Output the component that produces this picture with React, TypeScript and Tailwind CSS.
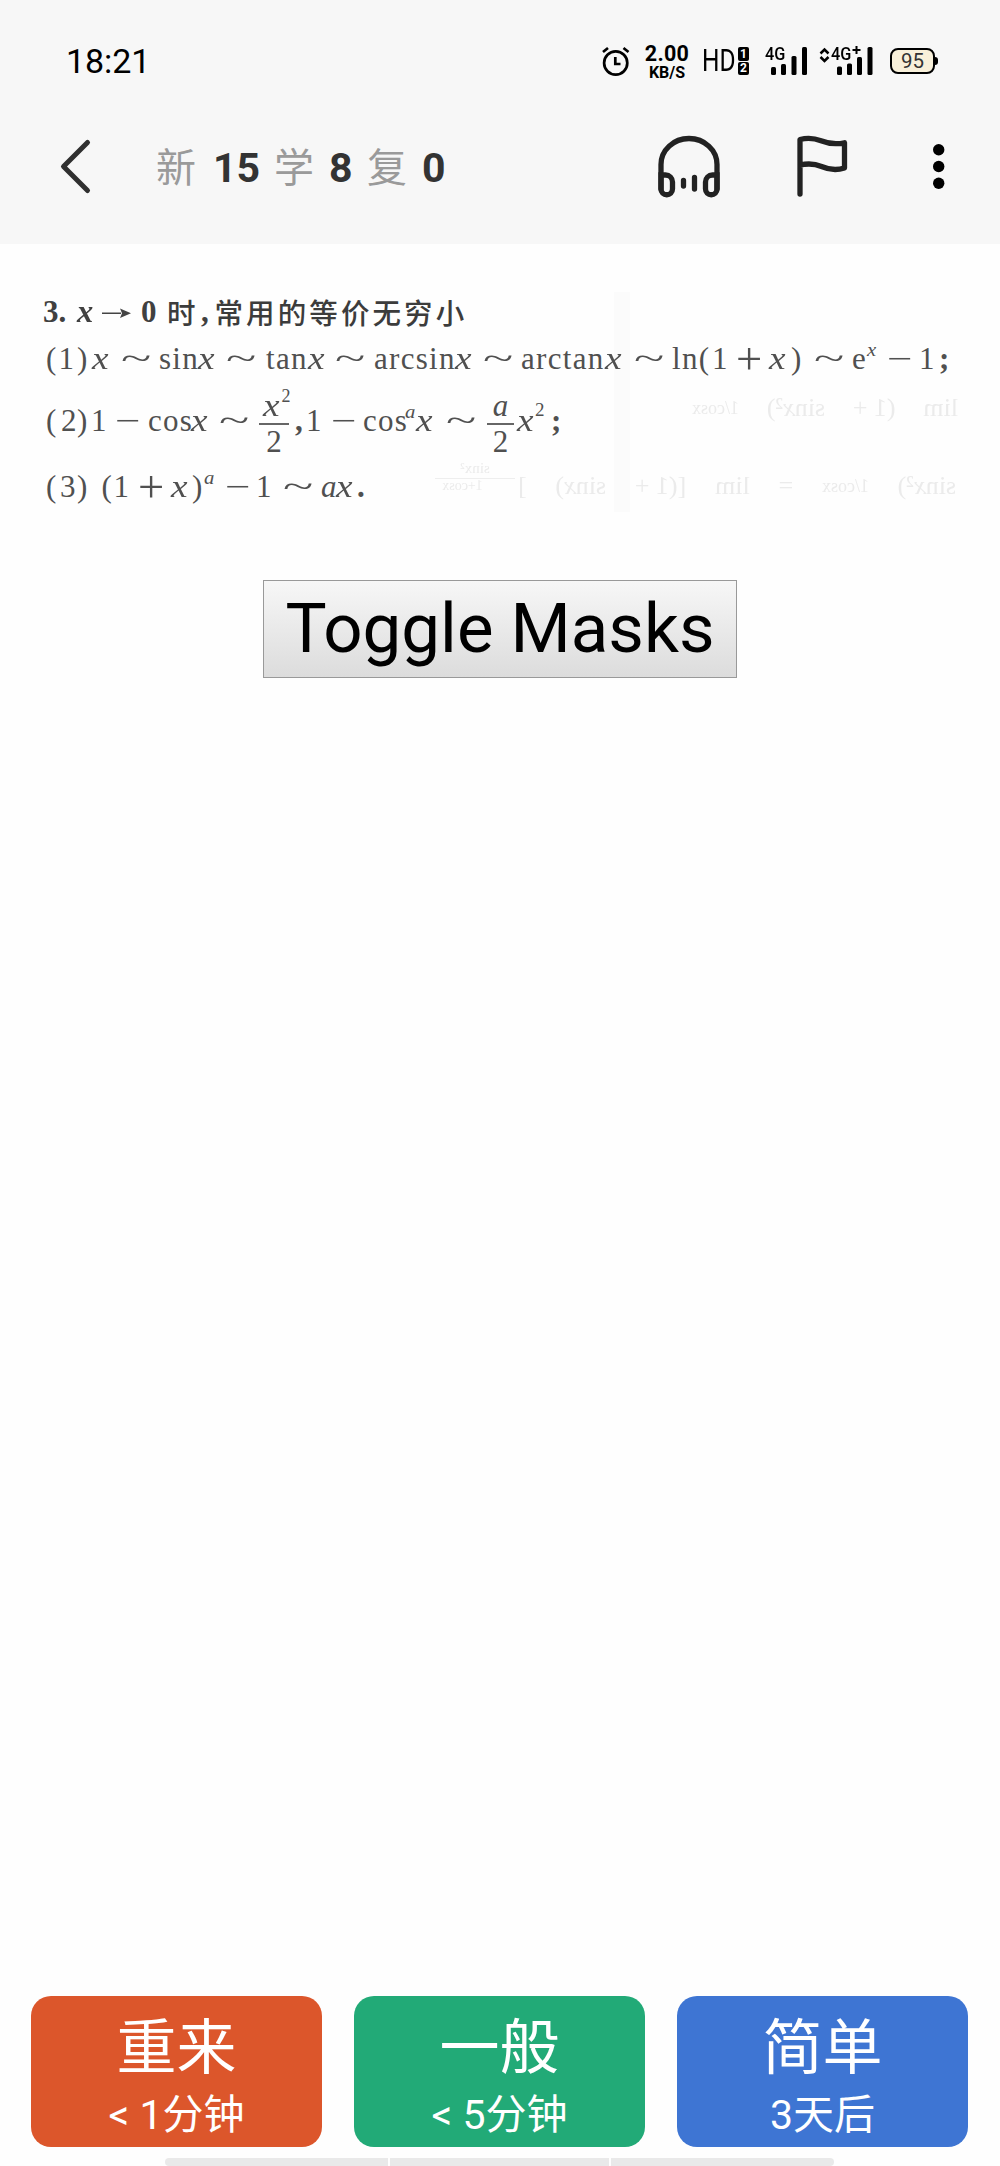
import React from "react";

type Kind = "roman" | "fn" | "italic" | "tilde" | "minus" | "plus" | "sup" | "supItalic" | "bold" | "boldItalic" | "cjk" | "arrow" | "frac";
type Token = [start: number, content: React.ReactNode, kind: Kind];

const kindClass: Record<Kind, string> = {
  roman: "",
  fn: "tracking-[1.3px]",
  italic: "italic scale-x-[1.2]",
  tilde: "scale-x-[1.8]",
  minus: "scale-x-[1.45]",
  plus: "scale-[1.5]",
  sup: "text-[19px] -translate-y-[11px]",
  supItalic: "italic text-[18px] -translate-y-[9px] scale-x-[1.15]",
  bold: "font-bold text-[#404040]",
  boldItalic: "italic font-bold text-[#404040] scale-x-[1.05]",
  cjk: "font-['Noto_Sans_CJK_SC'] font-medium text-[28.5px] tracking-[3.1px] text-[#3c3c3c]",
  arrow: "",
  frac: "",
};

function Formula({ tokens, className }: { tokens: Token[]; className: string }) {
  return (
    <div className={`flex h-10 whitespace-nowrap leading-10 ${className}`}>
      {tokens.map(([start, content, kind], i) => {
        const previous = i === 0 ? 0 : start;
        const next = i + 1 < tokens.length ? tokens[i + 1][0] : start + 40;
        return (
          <span key={i} className="shrink-0" style={{ width: next - previous, paddingLeft: i === 0 ? start : 0 }}>
            <span className={`inline-block h-10 origin-left align-top ${kindClass[kind]}`}>{content}</span>
          </span>
        );
      })}
    </div>
  );
}

function Fraction({ top, bottom, wide }: { top: React.ReactNode; bottom: string; wide?: boolean }) {
  return (
    <span className={`-mt-[12px] flex flex-col items-center ${wide ? "w-[30px]" : "w-[27px]"}`}>
      <span className="h-[34px] leading-[34px]">{top}</span>
      <span className="h-[1.5px] w-full bg-[#666]" />
      <span className="h-[34px] leading-[34px]">{bottom}</span>
    </span>
  );
}

const heading: Token[] = [
  [43, "3.", "bold"],
  [77, "x", "boldItalic"],
  [102, <svg width="29" height="40" viewBox="0 0 29 40" fill="#444"><path d="M0 20.500h19v1.500H0zM18 16.500l11 4.700L18 26l2-4.800z" /></svg>, "arrow"],
  [141, "0", "bold"],
  [167, "时", "cjk"],
  [201, ",", "bold"],
  [214.5, "常用的等价无穷小", "cjk"],
];

const first: Token[] = [
  [46, "(", "roman"], [58.5, "1", "roman"], [77, ")", "roman"], [92, "x", "italic"], [121, "~", "tilde"],
  [159, "sin", "fn"], [198, "x", "italic"], [226, "~", "tilde"], [266, "tan", "fn"], [308, "x", "italic"],
  [335, "~", "tilde"], [374, "arcsin", "fn"], [455, "x", "italic"], [483, "~", "tilde"], [521, "arctan", "fn"],
  [605, "x", "italic"], [634, "~", "tilde"], [672, "ln(", "fn"], [712, "1", "roman"], [736, "+", "plus"],
  [769, "x", "italic"], [791, ")", "roman"], [814, "~", "tilde"], [852, "e", "roman"], [867, "x", "supItalic"],
  [887, "−", "minus"], [919, "1", "roman"], [939, <b>;</b>, "roman"],
];

const second: Token[] = [
  [46, "(", "roman"], [61, "2", "roman"], [77, ")", "roman"], [91, "1", "roman"], [115, "−", "minus"],
  [148, "cos", "fn"], [191, "x", "italic"], [219, "~", "tilde"],
  [259, <Fraction wide top={<span className="relative"><i className="inline-block origin-left scale-x-[1.2] pr-[9px]">x</i><sup className="absolute -top-[9px] left-[19px] text-[18px] leading-[34px]">2</sup></span>} bottom="2" />, "frac"],
  [295, <b>,</b>, "roman"], [306, "1", "roman"], [331, "−", "minus"], [363, "cos", "fn"],
  [405, "a", "supItalic"], [415.5, "x", "italic"], [446, "~", "tilde"],
  [487, <Fraction top={<i>a</i>} bottom="2" />, "frac"],
  [517, "x", "italic"], [535, "2", "sup"], [551, <b>;</b>, "roman"],
];

const third: Token[] = [
  [46, "(", "roman"], [60, "3", "roman"], [77, ")", "roman"], [101.5, "(", "roman"], [113.5, "1", "roman"],
  [138, "+", "plus"], [171, "x", "italic"], [192, ")", "roman"], [204, "a", "supItalic"], [225, "−", "minus"],
  [256, "1", "roman"], [283, "~", "tilde"], [321, "a", "roman"], [336, "x", "italic"], [357, <b>.</b>, "roman"],
];
third[12][1] = <i>a</i>;

function ShowThrough() {
  return (
    <div aria-hidden className="pointer-events-none absolute inset-0 overflow-hidden font-['Liberation_Serif',serif] text-[26px] leading-8 text-[#ebebeb] blur-[0.7px]">
      <div className="absolute left-[614px] top-[48px] h-[220px] w-[16px] bg-[#fbfbfb]" />
      <div className="absolute left-[692px] top-[148px] flex w-[266px] -scale-x-100 justify-between whitespace-nowrap">
        <span>lim</span><span>(1 +</span><span>sin<i>x</i>²)</span><span className="text-[18px]">1/cosx</span>
      </div>
      <div className="absolute left-[518px] top-[226px] flex w-[438px] -scale-x-100 justify-between whitespace-nowrap">
        <span>sin<i>x</i>²)</span><span className="text-[18px]">1/cosx</span><span>=</span><span>lim</span><span>[(1 +</span><span>sin<i>x</i>)</span><span>]</span>
      </div>
      <div className="absolute left-[435px] top-[214px] w-[80px] -scale-x-100 border-b border-[#eee] text-center text-[15px] leading-5">sinx²</div>
      <div className="absolute left-[435px] top-[232px] w-[55px] -scale-x-100 text-center text-[14px] leading-5">1+cosx</div>
    </div>
  );
}

function StatusBar() {
  return (
    <div className="flex h-[122px] items-start font-['Roboto',sans-serif] text-black">
      <div className="ml-[66px] mt-[41px] w-[534px] text-[34px] leading-10 tracking-[-0.1px]">18:21</div>
      <svg className="mt-[44px] h-9 w-[32px] shrink-0" viewBox="600 44 32 36" fill="none" stroke="#000" strokeWidth="2.7">
        <circle cx="615.7" cy="63" r="11.6" />
        <path d="M615.3 57v7h5.2" />
        <path d="M603 52l5-4M628.500 52l-5-4" />
      </svg>
      <div className="ml-[8px] mt-[43px] flex w-[54px] flex-col items-center font-bold">
        <span className="text-[21.500px] leading-[22px] tracking-[0.3px]">2.00</span>
        <span className="text-[16px] leading-[15px]">KB/S</span>
      </div>
      <div className="ml-[8px] mt-[41px] w-[36px]">
        <span className="inline-block origin-left scale-x-[0.79] text-[31px] leading-10">HD</span>
      </div>
      <div className="mt-[47px] flex w-[11px] flex-col gap-px text-center text-[12px] font-bold leading-[14px] text-white">
        <span className="h-[14px] rounded-[2px] bg-black">1</span>
        <span className="h-[13px] rounded-[2px] bg-black leading-[13px]">2</span>
      </div>
      <div className="relative ml-[16px] mt-[44px] h-9 w-[46px]">
        <svg className="h-9 w-[46px]" viewBox="765 44 46 36">
          <rect x="771" y="67" width="5" height="8" rx="1.500" />
          <rect x="781" y="64" width="5" height="11" rx="1.500" />
          <rect x="791.500" y="56" width="5" height="19" rx="1.500" />
          <rect x="802" y="47" width="5" height="28" rx="1.500" />
        </svg>
        <span className="absolute left-0 top-0 origin-left scale-x-[0.88] text-[18.500px] font-medium leading-[21px]">4G</span>
      </div>
      <div className="relative ml-[7px] mt-[44px] h-9 w-[60px]">
        <svg className="h-9 w-[60px]" viewBox="818 44 60 36">
          <path d="M820.500 53.500l4-4 4 4M820.500 57l4 4 4-4" fill="none" stroke="#000" strokeWidth="2.500" />
          <rect x="837" y="66.500" width="5" height="8.500" rx="1.500" />
          <rect x="847" y="63.500" width="5" height="11.500" rx="1.500" />
          <rect x="857" y="57" width="5" height="18" rx="1.500" />
          <rect x="867.500" y="47" width="5" height="28" rx="1.500" />
          <path d="M856.500 46v8M852.500 50h8" stroke="#000" strokeWidth="2" />
        </svg>
        <span className="absolute left-[13px] top-0 origin-left scale-x-[0.88] text-[18.500px] font-medium leading-[21px]">4G</span>
      </div>
      <div className="relative ml-[12px] mt-[48px] h-[26px] w-[45px] rounded-[8px] border-[2.500px] border-black bg-[#f8f0da] text-center text-[20.500px] leading-[22px] text-[#333]">
        95
        <span className="absolute -right-[5px] top-[7px] h-[8px] w-[3px] rounded-r bg-black" />
      </div>
    </div>
  );
}

function TopBar() {
  const label = "text-[40px] text-[#9a9a9a]";
  const count = "font-bold text-[41px] text-[#333]";
  return (
    <div className="relative flex h-[122px] items-start font-['Roboto','Noto_Sans_CJK_SC',sans-serif]">
      <svg className="ml-[56px] mt-[12px] h-[68px] w-[40px]" viewBox="56 134 40 68" fill="none" stroke="#303030" strokeWidth="5" strokeLinecap="round" strokeLinejoin="round">
        <path d="M87.500 142.500L63.500 166.500l24 24" />
      </svg>
      <div className="ml-[60px] mt-[18px] flex w-[479px] items-baseline leading-[56px]">
        <span className={`w-[57px] ${label}`}>新</span>
        <span className={`w-[61px] ${count}`}>15</span>
        <span className={`w-[55px] ${label}`}>学</span>
        <span className={`w-[38px] ${count}`}>8</span>
        <span className={`w-[55px] ${label}`}>复</span>
        <span className={count}>0</span>
      </div>
      <svg className="ml-[17px] mt-[8px] h-[72px] w-[76px] shrink-0" viewBox="652 130 76 72" fill="none" stroke="#222" strokeWidth="5.300" strokeLinecap="round">
        <path d="M661 189v-24.500a28 26 0 0 1 56 0V189" />
        <path d="M661 175h4.500c4 0 7 3 7 7v7a5.700 5.700 0 0 1-11.500 0zM717 175h-4.500c-4 0-7 3-7 7v7a5.700 5.700 0 0 0 11.500 0z" />
        <path d="M683.500 180.500v5.500M694.500 177.500v11.500" />
      </svg>
      <svg className="ml-[62px] mt-[8px] h-[72px] w-[64px] shrink-0" viewBox="790 130 64 72" fill="none" stroke="#222" strokeWidth="5.300" strokeLinecap="round" strokeLinejoin="round">
        <path d="M800 194v-54.500c7.500-2 14-1.500 21 1.300 8 3.200 15 3.800 23.500 2V168c-8 2.500-15 2-23-1.500-7-3-13-3.300-21.500-1.500" />
      </svg>
      <svg className="ml-[76px] mt-[18px] h-[56px] w-[18px] shrink-0" viewBox="930 140 18 56">
        <circle cx="938.700" cy="149.700" r="5.700" />
        <circle cx="938.700" cy="166.500" r="5.700" />
        <circle cx="938.700" cy="183.300" r="5.700" />
      </svg>
    </div>
  );
}

function Answer({ title, interval, color }: { title: string; interval: string; color: string }) {
  return (
    <button className={`flex h-[151px] w-[291px] flex-col items-center rounded-[20px] text-white ${color}`}>
      <span className="mt-[15px] text-[60px] leading-[76px]">{title}</span>
      <span className="mt-[4px] text-[41px] leading-[48px]">{interval}</span>
    </button>
  );
}

export default function App() {
  return (
    <div className="flex h-[2166px] w-[1000px] flex-col overflow-hidden bg-[#fefefe]">
      <header className="h-[244px] bg-[#f7f7f7]">
        <StatusBar />
        <TopBar />
      </header>

      <main className="relative flex flex-1 flex-col">
        <ShowThrough />
        <section className="relative pt-[48px] font-['Liberation_Serif','Noto_Sans_CJK_SC',serif] text-[31px] text-[#505050]">
          <Formula tokens={heading} className="" />
          <Formula tokens={first} className="mt-[7px]" />
          <Formula tokens={second} className="mt-[22px]" />
          <Formula tokens={third} className="mt-[26px]" />
        </section>
        <button className="relative mt-[73px] h-[98px] w-[474px] self-center border border-[#999] bg-linear-to-b from-[#f7f7f7] to-[#dcdcdc] font-['Roboto',sans-serif] text-[69px] leading-[94px] text-black">
          Toggle Masks
        </button>
      </main>

      <footer className="font-['Roboto','Noto_Sans_CJK_SC',sans-serif]">
        <div className="flex justify-between pl-[31px] pr-8">
          <Answer title="重来" interval="< 1分钟" color="bg-[#dc562b]" />
          <Answer title="一般" interval="< 5分钟" color="bg-[#22aa77]" />
          <Answer title="简单" interval="3天后" color="bg-[#3e75d3]" />
        </div>
        <div className="ml-[165px] mt-[11px] flex h-[8px] w-[669px] gap-[2px] overflow-hidden rounded-[4px]">
          <div className="w-[223px] bg-[#e9e9e9]" />
          <div className="w-[219px] bg-[#e9e9e9]" />
          <div className="flex-1 bg-[#e9e9e9]" />
        </div>
      </footer>
    </div>
  );
}
